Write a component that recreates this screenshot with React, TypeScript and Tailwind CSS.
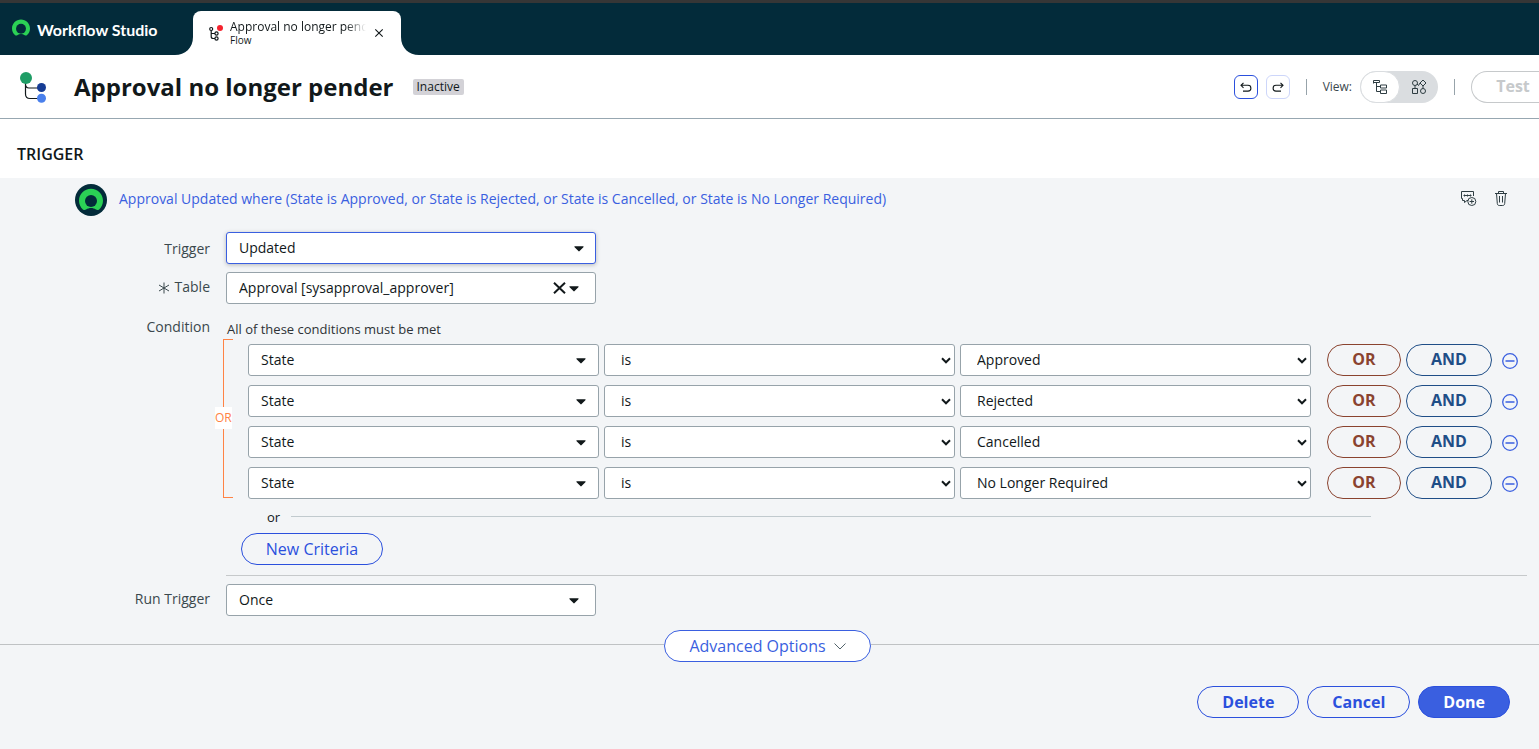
import React from "react";

type IconProps = { className?: string };

function Caret({ className = "" }: IconProps) {
  return (
    <svg className={className} width="10" height="6" viewBox="0 0 10 6" aria-hidden="true">
      <path d="M1 .3h8c.6 0 .8.5.4.9L5.6 5.1c-.4.4-.8.4-1.200 0L.6 1.200C.2.800.4.3 1 .3z" fill="#11181a" />
    </svg>
  );
}

function Chevron({ className = "" }: IconProps) {
  return (
    <svg className={className} width="10" height="7" viewBox="0 0 10 7" fill="none" aria-hidden="true">
      <path d="M1 1.300l4 4 4-4" stroke="#11181a" strokeWidth="2" />
    </svg>
  );
}

function RingLogo({ className = "", size, hole, holeFill }: IconProps & { size: number; hole: number; holeFill: string }) {
  return (
    <svg className={className} width={size} height={size} viewBox="0 0 24 24" aria-hidden="true">
      <path
        d="M12 .8C5.400.8 0 6.100 0 12.700c0 3.500 1.500 6.600 3.900 8.700.9.8 2.200.9 3.200.2 1.400-1 3.100-1.500 4.900-1.500s3.500.5 4.900 1.500c1 .7 2.300.6 3.200-.2 2.400-2.100 3.900-5.200 3.900-8.700C24 6.100 18.600.8 12 .8z"
        fill="#2bd155"
      />
      <circle cx="12" cy="13" r={hole} fill={holeFill} />
    </svg>
  );
}

function CustomSelect({
  id,
  label,
  value,
  width,
  focused,
  clearable,
  caret,
}: {
  id: string;
  label?: string;
  value: string;
  width: string;
  focused?: boolean;
  clearable?: boolean;
  caret: string;
}) {
  return (
    <div className={`relative min-w-0 ${width}`}>
      <select
        id={id}
        aria-label={label}
        defaultValue={value}
        className={`h-8 w-full appearance-none rounded-[3px] border bg-white pr-10 pl-3 text-sm text-[#11181a] outline-none ${
          focused ? "border-[#3a5fe0] shadow-[0_1px_4px_rgba(0,0,0,0.25)]" : "border-[#97a3aa]"
        }`}
      >
        <option>{value}</option>
      </select>
      {clearable && (
        <button type="button" aria-label="Clear" className="absolute top-[10px] right-[30px]">
          <svg width="13" height="12" viewBox="0 0 13 12" aria-hidden="true">
            <path d="M1 .8l11 10.400M12 .8L1 11.200" stroke="#11181a" strokeWidth="2" />
          </svg>
        </button>
      )}
      <Caret className={`pointer-events-none absolute top-[14px] ${caret}`} />
    </div>
  );
}

function NativeSelect({ label, value }: { label: string; value: string }) {
  return (
    <div className="relative min-w-0 flex-1">
      <select
        aria-label={label}
        defaultValue={value}
        className="h-8 w-full appearance-none rounded-[3px] border border-[#97a3aa] bg-white pr-6 pl-4 text-sm text-[#11181a] outline-none"
      >
        <option>{value}</option>
      </select>
      <Chevron className="pointer-events-none absolute top-[13px] right-1" />
    </div>
  );
}

function ConditionRow({ id, value }: { id: string; value: string }) {
  return (
    <li className="flex items-center">
      <div className="flex min-w-0 flex-1 gap-[5px]">
        <CustomSelect id={id} label="Field" value="State" width="flex-1" caret="right-[13px]" />
        <NativeSelect label="Operator" value="is" />
        <NativeSelect label="Value" value={value} />
      </div>
      <button type="button" className="ml-4 h-8 w-[74px] rounded-full border border-[#8a432f] pb-0.5 text-base font-bold text-[#8a432f]">
        OR
      </button>
      <button type="button" className="ml-[5px] h-8 w-[86px] rounded-full border border-[#1f4e87] pb-0.5 text-base font-bold text-[#1f4e87]">
        AND
      </button>
      <button type="button" aria-label="Remove condition" className="ml-[10px] pt-[2px]">
        <svg width="16" height="16" viewBox="0 0 16 16" fill="none" stroke="#3a5fe0" aria-hidden="true">
          <circle cx="8" cy="8" r="7.300" strokeWidth="1.300" />
          <path d="M3.500 8h9" strokeWidth="1.500" />
        </svg>
      </button>
    </li>
  );
}

function TopBar() {
  return (
    <header className="flex h-[55px] items-end border-t-3 border-[#363636] bg-[#032b3a]">
      <div className="flex h-[52px] w-[175px] items-center pt-0.5 pl-3 text-white">
        <RingLogo size={18} hole={6.6} holeFill="#032b3a" className="mb-1 shrink-0" />
        <span className="ml-[7px] font-[Lato] text-base font-bold whitespace-nowrap">Workflow Studio</span>
      </div>
      <svg width="18" height="18" viewBox="0 0 18 18" aria-hidden="true">
        <path d="M0 18C10 18 18 11 18 0v18z" fill="#fff" />
      </svg>
      <div className="flex h-11 w-[208px] items-center rounded-t-lg bg-white pl-4">
        <svg width="14" height="16" viewBox="0 0 14 16" fill="none" stroke="#11181a" strokeWidth="1.200" aria-hidden="true">
          <circle cx="2.200" cy="4" r="1.500" />
          <circle cx="7.500" cy="8.500" r="1.600" />
          <circle cx="7.500" cy="13.500" r="1.600" />
          <path d="M2.200 5.500v6c0 1.300.7 2 2 2H6M2.200 8.500H6" />
          <circle cx="11" cy="3" r="3" fill="#f5222d" stroke="none" />
        </svg>
        <div className="ml-[7px] w-[136px] overflow-hidden text-[#11181a]">
          <div className="overflow-hidden mask-r-from-85% text-xs leading-[14px] whitespace-nowrap">Approval no longer pender</div>
          <div className="text-[10px] leading-3">Flow</div>
        </div>
        <button type="button" aria-label="Close tab" className="ml-2">
          <svg width="10" height="10" viewBox="0 0 10 10" aria-hidden="true">
            <path d="M1.300 1.300l7.400 7.400M8.700 1.300L1.300 8.700" stroke="#11181a" strokeWidth="1.100" />
          </svg>
        </button>
      </div>
      <svg width="18" height="18" viewBox="0 0 18 18" aria-hidden="true">
        <path d="M18 18C8 18 0 11 0 0v18z" fill="#fff" />
      </svg>
    </header>
  );
}

function TitleBar() {
  return (
    <div className="flex h-16 items-center border-b border-[#97a7b1] bg-white pl-5">
      <svg width="27" height="31" viewBox="0 0 27 31" className="mt-px shrink-0" aria-hidden="true">
        <path d="M5.500 8v14c0 3 1.500 4.500 4.500 4.500h11M5.500 12c0 3 1.200 4 3.500 4H21" fill="none" stroke="#11181a" strokeWidth="1.200" />
        <circle cx="6" cy="6" r="6" fill="#1f9d66" />
        <circle cx="21.500" cy="15.500" r="4.500" fill="#163c94" />
        <circle cx="21.500" cy="26.300" r="4.500" fill="#4a80ec" />
      </svg>
      <h1 className="ml-[27px] text-2xl font-bold whitespace-nowrap text-[#11181a]">Approval no longer pender</h1>
      <span className="mt-px ml-[19px] rounded-[2px] bg-[#d3d2d7] px-1 text-xs leading-4 text-[#11181a]">Inactive</span>
      <div className="ml-auto flex h-8 shrink-0 items-center overflow-hidden text-[#3a484d]">
        <button type="button" aria-label="Undo" className="flex size-6 items-center justify-center rounded-md border border-[#2b50dd] bg-white">
          <svg width="12" height="12" viewBox="0 0 12 12" fill="none" stroke="#11181a" strokeWidth="1.100" aria-hidden="true">
            <path d="M3.500 1.800L1 4.300l2.500 2.500M1 4.300h7a2.900 2.900 0 010 5.800H3" />
          </svg>
        </button>
        <button type="button" aria-label="Redo" className="ml-2 flex size-6 items-center justify-center rounded-md border border-[#cdd6fa] bg-white">
          <svg width="12" height="12" viewBox="0 0 12 12" fill="none" stroke="#11181a" strokeWidth="1.100" aria-hidden="true">
            <path d="M8.500 1.800L11 4.300 8.500 6.800M11 4.300H4a2.900 2.900 0 000 5.800h5" />
          </svg>
        </button>
        <span className="ml-4 h-4 w-px bg-[#97a3aa]" />
        <span className="ml-4 text-xs">View:</span>
        <div className="ml-2 flex h-8 w-[78px] rounded-full bg-[#dadde0]">
          <button type="button" aria-label="List view" className="flex w-10 items-center justify-center rounded-full border border-[#dadde0] bg-white">
            <svg width="16" height="16" viewBox="0 0 16 16" fill="none" stroke="#2e3d42" aria-hidden="true">
              <path d="M1.500 4.500v-3h6v2h-6M4.500 4v8.500h4M4.500 7.500h4M8.500 6h6v3h-6zM8.500 11h6v3.500h-6z" />
            </svg>
          </button>
          <button type="button" aria-label="Diagram view" className="flex w-[38px] items-center justify-center">
            <svg width="16" height="16" viewBox="0 0 16 16" fill="none" stroke="#2e3d42" aria-hidden="true">
              <circle cx="4" cy="4" r="2.500" />
              <path d="M12 1l3 3-3 3-3-3zM1.500 9.500h5v5h-5zM6 5l1.500 1.500L9 4M4 6.500v3M12 7v2.500" />
              <circle cx="12" cy="12" r="2.500" />
            </svg>
          </button>
        </div>
        <span className="ml-4 h-4 w-px bg-[#97a3aa]" />
        <button type="button" disabled className="ml-4 h-8 w-[68px] rounded-l-full border border-r-0 border-[#c6c9cb] pb-0.5 pl-[15px] text-base font-bold text-[#c6c9cb]">
          Test
        </button>
      </div>
    </div>
  );
}

const labelClass = "w-[210px] shrink-0 text-right text-sm leading-5 text-[#3a484d]";
const values = ["Approved", "Rejected", "Cancelled", "No Longer Required"];

export default function App() {
  return (
    <div className="flex min-h-screen flex-col overflow-x-hidden bg-[#f3f5f7] font-['Open_Sans','Noto_Sans',sans-serif] text-[#11181a]">
      <TopBar />
      <TitleBar />
      <h2 className="bg-white pt-[23px] pb-3 pl-[17px] text-base leading-6 font-semibold">TRIGGER</h2>

      <main className="pb-8">
        <div className="flex items-center pt-1.5 pr-8 pl-[75px]">
          <span className="flex size-8 shrink-0 items-center justify-center rounded-full bg-[#032b3a]">
            <RingLogo size={24} hole={6} holeFill="#032b3a" />
          </span>
          <a href="#trigger" className="ml-3 pb-0.5 text-sm text-[#3a5fe0]">
            Approval Updated where (State is Approved, or State is Rejected, or State is Cancelled, or State is No Longer Required)
          </a>
          <button type="button" aria-label="Add annotation" className="ml-auto pb-1">
            <svg width="16" height="16" viewBox="0 0 16 16" fill="none" stroke="#2e3d42" aria-hidden="true">
              <path d="M7 10.500H6l-2.500 2v-2h-2v-2h-1v-7h12v4.500" />
              <circle cx="10.800" cy="11.500" r="4" />
              <path d="M10.800 9.300v4.400M8.600 11.500H13M2.500 5.500h8M3.500 4.500v2M6.500 4.500v2M9.500 4.500v2" />
            </svg>
          </button>
          <button type="button" aria-label="Delete trigger" className="ml-[18px] pb-1">
            <svg width="12" height="15" viewBox="0 0 12 15" fill="none" stroke="#2e3d42" aria-hidden="true">
              <path d="M0 2.500h12M3.500 2.500v-2h5v2M1.500 2.500l.8 10c.1 1.200.7 2 2 2h3.400c1.300 0 1.900-.8 2-2l.8-10M4.500 5v6.500M7.500 5v6.500" />
            </svg>
          </button>
        </div>

        <div className="mt-4 flex">
          <label htmlFor="trigger-type" className={`${labelClass} pt-[7px]`}>Trigger</label>
          <div className="ml-4"><CustomSelect id="trigger-type" value="Updated" width="w-[370px]" focused caret="right-3" /></div>
        </div>
        <div className="mt-2 flex">
          <label htmlFor="trigger-table" className={`${labelClass} flex items-start justify-end gap-[5px] pt-[5px]`}>
            <svg width="12" height="12" viewBox="0 0 12 12" className="mt-[5px]" aria-hidden="true">
              <path d="M6 .5v11M1 3l10 6M11 3L1 9" stroke="#3a484d" />
            </svg>
            Table
          </label>
          <div className="ml-4">
            <CustomSelect id="trigger-table" value="Approval [sysapproval_approver]" width="w-[370px]" clearable caret="right-[17px]" />
          </div>
        </div>

        <div className="mt-[13px] flex">
          <div className={labelClass}>Condition</div>
          <div className="ml-[13px] min-w-0 flex-1 pr-[21px]">
            <p className="pt-[3px] pl-1 text-[13px] leading-[18px] text-[#2e3236]">All of these conditions must be met</p>
            <div className="relative mt-[1px] py-[5px] pl-[25px]">
              <div className="absolute top-0 left-0 h-[159px] w-[10px] border border-r-0 border-[#ff8345]" />
              <span className="absolute top-[68px] -left-2 bg-white text-xs leading-[22px] text-[#ff8345]">OR</span>
              <ul className="flex flex-col gap-[9px]">
                {values.map((v, i) => (
                  <ConditionRow key={v} id={`field-${i}`} value={v} />
                ))}
              </ul>
            </div>
            <div className="mt-1 mr-[147px] ml-11 flex items-center gap-[11px] text-[13px] leading-[18px]">
              or
              <span className="mb-0.5 h-px flex-1 bg-[#c1cace]" />
            </div>
            <button type="button" className="mt-[7px] ml-[18px] h-8 w-[142px] rounded-full border border-[#2b50dd] text-base text-[#2b50dd]">
              New Criteria
            </button>
          </div>
        </div>

        <div className="mt-[10px] mr-3 ml-[226px] h-px bg-[#c6c9cb]" />
        <div className="mt-2 flex">
          <label htmlFor="run-trigger" className={`${labelClass} pt-[5px]`}>Run Trigger</label>
          <div className="ml-4"><CustomSelect id="run-trigger" value="Once" width="w-[370px]" caret="right-[17px]" /></div>
        </div>

        <div className="mt-[14px] flex items-center">
          <span className="mb-[3px] h-px flex-1 bg-[#bfc2c4]" />
          <button type="button" className="flex h-8 items-center gap-2 rounded-full border border-[#3a5fe0] bg-white px-6 text-base text-[#3a5fe0]">
            Advanced Options
            <svg width="12" height="7" viewBox="0 0 12 7" fill="none" stroke="#53646b" aria-hidden="true">
              <path d="M.5.5L6 6l5.500-5.500" />
            </svg>
          </button>
          <span className="mb-[3px] h-px grow basis-1 bg-[#bfc2c4]" />
        </div>

        <div className="mt-6 flex justify-end gap-2 pr-[29px] text-base font-bold">
          <button type="button" className="h-8 rounded-full border border-[#2b50dd] px-6 text-[#2b50dd]">Delete</button>
          <button type="button" className="h-8 rounded-full border border-[#2b50dd] px-6 text-[#2b50dd]">Cancel</button>
          <button type="button" className="h-8 rounded-full border border-[#2b50dd] bg-[#3a5fe0] px-6 text-white">Done</button>
        </div>
      </main>
    </div>
  );
}
